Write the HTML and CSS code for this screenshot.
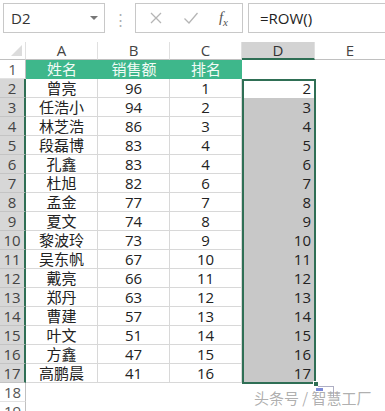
FILE: index.html
```html
<!DOCTYPE html>
<html lang="zh">
<head>
<meta charset="utf-8">
<link rel="stylesheet" href="styles.css">
</head>
<body>
<div class="app">
  <div class="fbar">
    <div class="namebox"><span>D2</span><span class="caret"></span></div>
    <div class="dots">⋮</div>
    <div class="btns">
      <svg class="ico" width="14" height="14" viewBox="0 0 14 14"><path d="M2 2L12 12M12 2L2 12" stroke="#b5b5b5" stroke-width="1.3" fill="none"/></svg>
      <svg class="ico" width="16" height="14" viewBox="0 0 16 14"><path d="M1.5 7.5L6 12L14.5 2" stroke="#b5b5b5" stroke-width="1.3" fill="none"/></svg>
      <span class="fx"><i>f</i><sub>x</sub></span>
    </div>
    <div class="formula">=ROW()</div>
  </div>

  <div class="sheet">
    <div class="colhdr corner"><span class="tri"></span></div>
    <div class="colhdr">A</div>
    <div class="colhdr">B</div>
    <div class="colhdr">C</div>
    <div class="colhdr sel">D</div>
    <div class="colhdr last">E</div>

    <div class="rowhdr">1</div>
    <div class="th">姓名</div><div class="th">销售额</div><div class="th">排名</div><div class="blank"></div><div class="blank"></div>

    <div class="rowhdr on">2</div><div class="c">曾亮</div><div class="c n">96</div><div class="c n">1</div><div class="d first">2</div><div class="blank"></div>
    <div class="rowhdr on">3</div><div class="c">任浩小</div><div class="c n">94</div><div class="c n">2</div><div class="d">3</div><div class="blank"></div>
    <div class="rowhdr on">4</div><div class="c">林芝浩</div><div class="c n">86</div><div class="c n">3</div><div class="d">4</div><div class="blank"></div>
    <div class="rowhdr on">5</div><div class="c">段磊博</div><div class="c n">83</div><div class="c n">4</div><div class="d">5</div><div class="blank"></div>
    <div class="rowhdr on">6</div><div class="c">孔鑫</div><div class="c n">83</div><div class="c n">4</div><div class="d">6</div><div class="blank"></div>
    <div class="rowhdr on">7</div><div class="c">杜旭</div><div class="c n">82</div><div class="c n">6</div><div class="d">7</div><div class="blank"></div>
    <div class="rowhdr on">8</div><div class="c">孟金</div><div class="c n">77</div><div class="c n">7</div><div class="d">8</div><div class="blank"></div>
    <div class="rowhdr on">9</div><div class="c">夏文</div><div class="c n">74</div><div class="c n">8</div><div class="d">9</div><div class="blank"></div>
    <div class="rowhdr on">10</div><div class="c">黎波玲</div><div class="c n">73</div><div class="c n">9</div><div class="d">10</div><div class="blank"></div>
    <div class="rowhdr on">11</div><div class="c">吴东帆</div><div class="c n">67</div><div class="c n">10</div><div class="d">11</div><div class="blank"></div>
    <div class="rowhdr on">12</div><div class="c">戴亮</div><div class="c n">66</div><div class="c n">11</div><div class="d">12</div><div class="blank"></div>
    <div class="rowhdr on">13</div><div class="c">郑丹</div><div class="c n">63</div><div class="c n">12</div><div class="d">13</div><div class="blank"></div>
    <div class="rowhdr on">14</div><div class="c">曹建</div><div class="c n">57</div><div class="c n">13</div><div class="d">14</div><div class="blank"></div>
    <div class="rowhdr on">15</div><div class="c">叶文</div><div class="c n">51</div><div class="c n">14</div><div class="d">15</div><div class="blank"></div>
    <div class="rowhdr on">16</div><div class="c">方鑫</div><div class="c n">47</div><div class="c n">15</div><div class="d">16</div><div class="blank"></div>
    <div class="rowhdr on">17</div><div class="c">高鹏晨</div><div class="c n">41</div><div class="c n">16</div><div class="d">17</div><div class="blank"></div>
    <div class="rowhdr">18</div><div class="blank"></div><div class="blank"></div><div class="blank"></div><div class="blank"></div><div class="blank"></div>
    <div class="rowhdr">19</div><div class="blank"></div><div class="blank"></div><div class="blank"></div><div class="blank"></div><div class="blank"></div>

    <div class="selbox"></div>
    <div class="handle"></div>
  </div>

  <div class="wm">头条号 / 智慧工厂</div>
  <div class="wmicon"><span></span></div>
</div>
</body>
</html>
```

FILE: styles.css
```css
* { box-sizing: border-box; }
html, body { margin: 0; padding: 0; background: #fff; }
body { width: 385px; height: 411px; overflow: hidden; font-family: "Noto Sans CJK SC", "Noto Sans", sans-serif; color: #222; }
.app { position: relative; width: 385px; height: 411px; overflow: hidden; }

.fbar { display: flex; align-items: center; height: 42px; padding: 3px 0 9px 3px; }
.namebox { width: 102px; height: 30px; border: 1px solid #c8c8c8; display: flex; align-items: center; justify-content: space-between; padding: 0 6px 0 7px; font-size: 15px; color: #333; font-family: "Open Sans", "Noto Sans", sans-serif; }
.caret { width: 0; height: 0; border-left: 4px solid transparent; border-right: 4px solid transparent; border-top: 4px solid #777; }
.dots { width: 30px; text-align: center; color: #b0b0b0; font-size: 15px; }
.btns { width: 108px; height: 30px; border: 1px solid #c8c8c8; display: flex; align-items: center; justify-content: space-between; padding: 0 14px 0 13px; }
.fx { font-family: "Liberation Serif", serif; font-size: 15px; color: #555; }
.fx sub { font-size: 11px; font-style: italic; }
.formula { flex: 1; height: 30px; margin-left: 5px; border: 1px solid #c8c8c8; border-right: none; font-size: 15px; padding-left: 11px; line-height: 28px; color: #222; font-family: "Open Sans", "Noto Sans", sans-serif; }

.sheet { position: relative; display: grid; grid-template-columns: 26px 72px 72px 72px 73px 70px; grid-template-rows: 18px; grid-auto-rows: 19px; }
.sheet > div { white-space: nowrap; }
.colhdr { border-bottom: 1px solid #c0c0c0; border-right: 1px solid #e0e0e0; text-align: center; font-size: 15px; line-height: 17px; color: #444; font-family: "Open Sans", "Noto Sans", sans-serif; }
.colhdr.last { border-right: none; }
.colhdr.sel { background: #d3d3d3; border-bottom: 2px solid #2f6f55; color: #333; }
.corner { position: relative; }
.tri { position: absolute; right: 3px; bottom: 3px; width: 0; height: 0; border-left: 11px solid transparent; border-bottom: 11px solid #dcdcdc; }
.rowhdr { border-right: 1px solid #c0c0c0; border-bottom: 1px solid #e2e2e2; text-align: center; font-size: 15px; line-height: 19px; color: #555; font-family: "Open Sans", "Noto Sans", sans-serif; }
.rowhdr.on { background: #d7d7d7; border-right: 2px solid #2f6f55; border-bottom: 1px solid #c4c4c4; color: #444; }
.th { background: #3eb78b; color: #f2fbf6; text-align: center; font-size: 15px; line-height: 18px; }
.c { border-right: 1px solid #d8d8d8; border-bottom: 1px solid #d8d8d8; text-align: center; font-size: 15px; line-height: 18px; color: #222; }
.c.n { font-family: "Open Sans", "Noto Sans", sans-serif; }
.d { background: #c8c8c8; text-align: right; padding-right: 4px; font-size: 15px; line-height: 19px; color: #222; font-family: "Open Sans", "Noto Sans", sans-serif; }
.d.first { background: #fff; }

.selbox { position: absolute; left: 242px; top: 37px; width: 74px; height: 305px; border: 2px solid #2f6f55; pointer-events: none; }
.handle { position: absolute; left: 313px; top: 339px; width: 6px; height: 6px; background: #2f6f55; border: 1px solid #fff; }

.wm { position: absolute; left: 254px; top: 389px; font-size: 15px; line-height: 18px; color: rgba(130,130,130,0.65); white-space: nowrap; }
.wmicon { position: absolute; left: 318px; top: 386px; width: 16px; height: 11px; border: 1px solid rgba(140,140,170,0.7); border-left: none; border-bottom: none; }
.wmicon span { position: absolute; left: -2px; top: 1px; width: 7px; height: 3px; background: rgba(70,90,200,0.7); }
```
